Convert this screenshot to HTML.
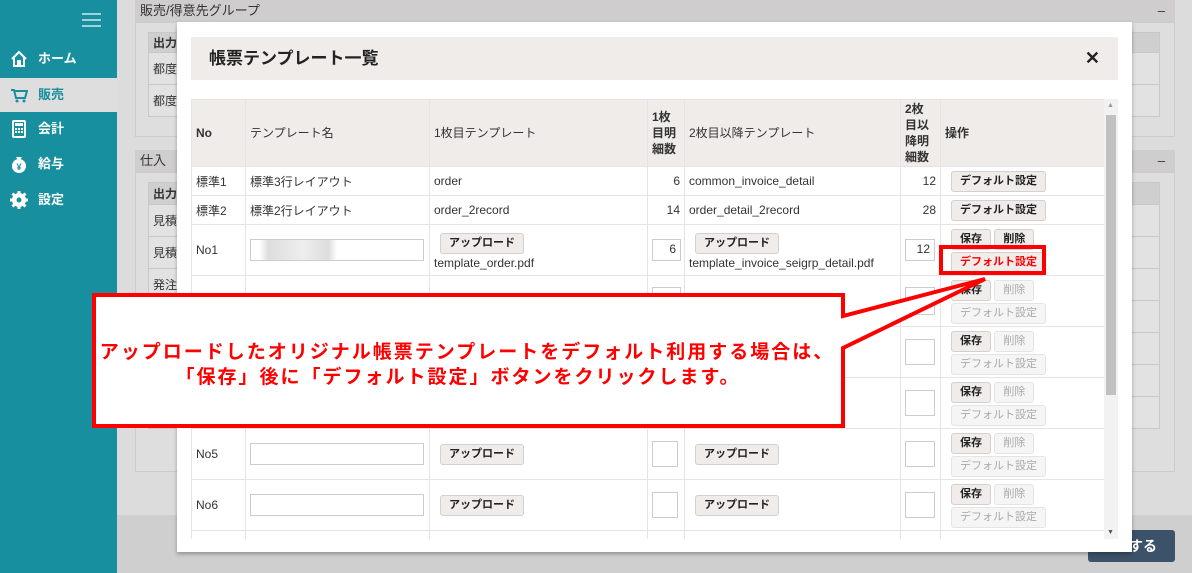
<!DOCTYPE html>
<html><head><meta charset="utf-8"><style>
*{box-sizing:border-box;margin:0;padding:0}
body{width:1192px;height:573px;overflow:hidden;position:relative;background:#d4d4d4;font-family:"Liberation Sans","Noto Sans CJK JP",sans-serif;font-size:12px;color:#333}
.a{position:absolute}
#side{left:0;top:0;width:117px;height:573px;background:#188f9f}
.mi{position:absolute;left:0;width:117px;height:34px;color:#fff;font-weight:bold;font-size:13px;line-height:34px;padding-left:38px}
.mi .ic{position:absolute;left:10px;top:8px;width:18px;height:18px}
.bg{background:#dcdcdc}
.sh{background:#cfcdcd;font-size:13px;line-height:22px;padding-left:5px}
.gt td{border:1px solid #c8c8c8;height:32px;padding-left:4px;font-size:12px;background:#e2e2e2}
#modal{left:177px;top:22px;width:955px;height:530px;background:#fff;box-shadow:0 2px 4px rgba(0,0,0,.3)}
table.t{border-collapse:collapse;position:absolute;left:14px;top:77px;width:913px;table-layout:fixed}
.t td,.t th{border:1px solid #e6e3e2;font-size:12px;padding:0 4px;vertical-align:middle;text-align:left;color:#333}
.t th{background:#efecea;font-weight:bold;height:67px;line-height:16px}
.r{text-align:right!important}
.btn{display:inline-block;background:#efecea;border:1px solid #d3d0ce;border-radius:3px;font-size:11px;font-weight:bold;padding:0 8px;line-height:19px;color:#222}
.dis{color:#aaa;background:#f6f5f5;border-color:#e6e4e3;font-weight:normal}
.inp{display:inline-block;border:1px solid #ccc;height:22px;vertical-align:middle}
</style></head><body>
<div class="a bg" style="left:117px;top:0;width:1075px;height:515px"></div>
<div class="a sh" style="left:135px;top:0;width:1040px;height:22px">販売/得意先グループ<span style="position:absolute;right:10px">–</span></div>
<div class="a" style="left:135px;top:22px;width:1040px;height:115px;border:1px solid #ccc;background:#dedede"></div>
<table class="a gt" style="left:148px;top:32px;width:1012px;border-collapse:collapse"><tr><td style="height:20px;background:#d0cfcf;font-weight:bold">出力</td></tr><tr><td>都度</td></tr><tr><td>都度</td></tr></table>
<div class="a sh" style="left:135px;top:150px;width:1040px;height:22px">仕入<span style="position:absolute;right:10px">–</span></div>
<div class="a" style="left:135px;top:172px;width:1040px;height:300px;border:1px solid #ccc;background:#dedede"></div>
<table class="a gt" style="left:148px;top:182px;width:1012px;border-collapse:collapse"><tr><td style="height:22px;background:#d0cfcf;font-weight:bold">出力</td></tr><tr><td>見積</td></tr><tr><td>見積</td></tr><tr><td>発注</td></tr><tr><td></td></tr><tr><td></td></tr><tr><td></td></tr><tr><td>支払</td></tr></table>
<div class="a" style="left:117px;top:515px;width:1075px;height:58px;background:#cfcfcf"></div>
<div class="a" style="left:1088px;top:530px;width:87px;height:32px;background:#3c5269;border-radius:3px;color:#fff;font-weight:bold;font-size:14px;line-height:32px;text-align:right;padding-right:18px">する</div>

<div id="side" class="a">
 <div class="a" style="left:82px;top:13px;width:19px;height:2px;background:#9fd3da;box-shadow:0 6px 0 #9fd3da,0 12px 0 #9fd3da"></div>
 <div class="mi" style="top:42px"><svg class="ic" viewBox="0 0 18 18"><path d="M2 9L9 2l7 7M4 8v8h4v-5h2v5h4V8" fill="none" stroke="#fff" stroke-width="2"/></svg>ホーム</div>
 <div class="mi" style="top:78px;background:#dedede;color:#188f9f"><svg class="ic" viewBox="0 0 18 18"><path d="M1 4h3l2 8h9l2-7H5" fill="none" stroke="#188f9f" stroke-width="2"/><circle cx="7" cy="15" r="1.5" fill="#188f9f"/><circle cx="14" cy="15" r="1.5" fill="#188f9f"/></svg>販売</div>
 <div class="mi" style="top:112px"><svg class="ic" viewBox="0 0 18 18"><rect x="3" y="1" width="12" height="16" rx="1" fill="none" stroke="#fff" stroke-width="2"/><rect x="5" y="3" width="8" height="3" fill="#fff"/><path d="M5 9h2M8 9h2M11 9h2M5 12h2M8 12h2M11 12h2" stroke="#fff" stroke-width="2"/></svg>会計</div>
 <div class="mi" style="top:147px"><svg class="ic" viewBox="0 0 18 18"><circle cx="9" cy="11" r="7" fill="#fff"/><path d="M6 2h6l-2 3H8z" fill="#fff"/><text x="9" y="15" font-size="9" text-anchor="middle" fill="#188f9f" font-weight="bold">¥</text></svg>給与</div>
 <div class="mi" style="top:183px"><svg class="ic" viewBox="0 0 18 18"><circle cx="9" cy="9" r="5" fill="none" stroke="#fff" stroke-width="4"/><path d="M9 0v18M0 9h18M2.5 2.5l13 13M15.5 2.5l-13 13" stroke="#fff" stroke-width="3"/><circle cx="9" cy="9" r="2.5" fill="#188f9f"/></svg>設定</div>
</div>

<div id="modal" class="a">
 <div class="a" style="left:14px;top:15px;width:927px;height:43px;background:#efecea;font-size:17px;font-weight:bold;line-height:43px;padding-left:18px;color:#222">帳票テンプレート一覧<span style="position:absolute;right:18px;font-size:18px">✕</span></div>
 <div class="a" style="left:927px;top:77px;width:14px;height:440px;background:#f2f2f2"><div style="position:absolute;left:2px;top:16px;width:10px;height:280px;background:#c1c1c1"></div><div style="position:absolute;left:3px;top:3px;font-size:7px;color:#999">▲</div><div style="position:absolute;left:3px;bottom:3px;font-size:7px;color:#555">▼</div></div>
 <div class="a" style="left:0;top:77px;width:927px;height:440px;overflow:hidden">
 <table class="t" style="left:14px;top:0">
 <colgroup><col style="width:54px"><col style="width:184px"><col style="width:218px"><col style="width:37px"><col style="width:216px"><col style="width:40px"><col style="width:164px"></colgroup>
 <tr><th>No</th><th style="font-weight:normal">テンプレート名</th><th style="font-weight:normal">1枚目テンプレート</th><th>1枚<br>目明<br>細数</th><th style="font-weight:normal">2枚目以降テンプレート</th><th>2枚<br>目以<br>降明<br>細数</th><th>操作</th></tr>
 <tr style="height:29px"><td>標準1</td><td>標準3行レイアウト</td><td>order</td><td class="r">6</td><td>common_invoice_detail</td><td class="r">12</td><td style="padding-left:10px"><span class="btn">デフォルト設定</span></td></tr>
 <tr style="height:29px"><td>標準2</td><td>標準2行レイアウト</td><td>order_2record</td><td class="r">14</td><td>order_detail_2record</td><td class="r">28</td><td style="padding-left:10px"><span class="btn">デフォルト設定</span></td></tr>
 <tr style="height:51px"><td>No1</td><td><span class="inp" style="width:174px;background:linear-gradient(90deg,#fff 5%,#ddd 10%,#eee 30%,#ddd 45%,#fff 50%)"></span></td><td style="line-height:18px;padding-top:4px"><span class="btn" style="margin-left:6px">アップロード</span><br>template_order.pdf</td><td><span class="inp" style="width:29px;text-align:right;padding:2px 4px 0 0">6</span></td><td style="line-height:18px;padding-top:4px"><span class="btn" style="margin-left:6px">アップロード</span><br>template_invoice_seigrp_detail.pdf</td><td><span class="inp" style="width:30px;text-align:right;padding:2px 4px 0 0">12</span></td><td style="padding-left:10px;line-height:22px"><span class="btn">保存</span> <span class="btn">削除</span><br><span class="btn" style="color:#f00">デフォルト設定</span></td></tr>
 <tr style="height:51px"><td></td><td></td><td></td><td><span class="inp" style="width:29px;height:28px"></span></td><td></td><td><span class="inp" style="width:30px;height:28px"></span></td><td style="padding-left:10px;line-height:22px"><span class="btn">保存</span> <span class="btn dis">削除</span><br><span class="btn dis">デフォルト設定</span></td></tr>
 <tr style="height:51px"><td></td><td></td><td></td><td></td><td></td><td><span class="inp" style="width:30px;height:26px"></span></td><td style="padding-left:10px;line-height:22px"><span class="btn">保存</span> <span class="btn dis">削除</span><br><span class="btn dis">デフォルト設定</span></td></tr>
 <tr style="height:51px"><td></td><td></td><td></td><td></td><td></td><td><span class="inp" style="width:30px;height:26px"></span></td><td style="padding-left:10px;line-height:22px"><span class="btn">保存</span> <span class="btn dis">削除</span><br><span class="btn dis">デフォルト設定</span></td></tr>
 <tr style="height:51px"><td>No5</td><td><span class="inp" style="width:174px"></span></td><td><span class="btn" style="margin-left:6px">アップロード</span></td><td><span class="inp" style="width:26px;height:26px"></span></td><td><span class="btn" style="margin-left:6px">アップロード</span></td><td><span class="inp" style="width:30px;height:26px"></span></td><td style="padding-left:10px;line-height:22px"><span class="btn">保存</span> <span class="btn dis">削除</span><br><span class="btn dis">デフォルト設定</span></td></tr>
 <tr style="height:51px"><td>No6</td><td><span class="inp" style="width:174px"></span></td><td><span class="btn" style="margin-left:6px">アップロード</span></td><td><span class="inp" style="width:26px;height:26px"></span></td><td><span class="btn" style="margin-left:6px">アップロード</span></td><td><span class="inp" style="width:30px;height:26px"></span></td><td style="padding-left:10px;line-height:22px"><span class="btn">保存</span> <span class="btn dis">削除</span><br><span class="btn dis">デフォルト設定</span></td></tr>
 <tr style="height:30px"><td></td><td></td><td></td><td></td><td></td><td></td><td style="padding-left:10px;vertical-align:bottom"><span class="btn">保存</span> <span class="btn dis">削除</span></td></tr>
 </table></div>
</div>

<svg class="a" style="left:0;top:0" width="1192" height="573">
<rect x="941" y="247" width="103" height="26" fill="none" stroke="#f00" stroke-width="4"/>
<polygon points="94,295 843,295 843,316 985,279 843,348 843,426 94,426" fill="#fff" stroke="#f00" stroke-width="4" stroke-linejoin="miter"/>
<text x="467" y="358" text-anchor="middle" fill="#f00" font-size="19" font-weight="bold" letter-spacing="2" font-family="Liberation Sans,Noto Sans CJK JP,sans-serif">アップロードしたオリジナル帳票テンプレートをデフォルト利用する場合は、</text>
<text x="458" y="383" text-anchor="middle" fill="#f00" font-size="19" font-weight="bold" letter-spacing="2" font-family="Liberation Sans,Noto Sans CJK JP,sans-serif">「保存」後に「デフォルト設定」ボタンをクリックします。</text>
</svg>
</body></html>
